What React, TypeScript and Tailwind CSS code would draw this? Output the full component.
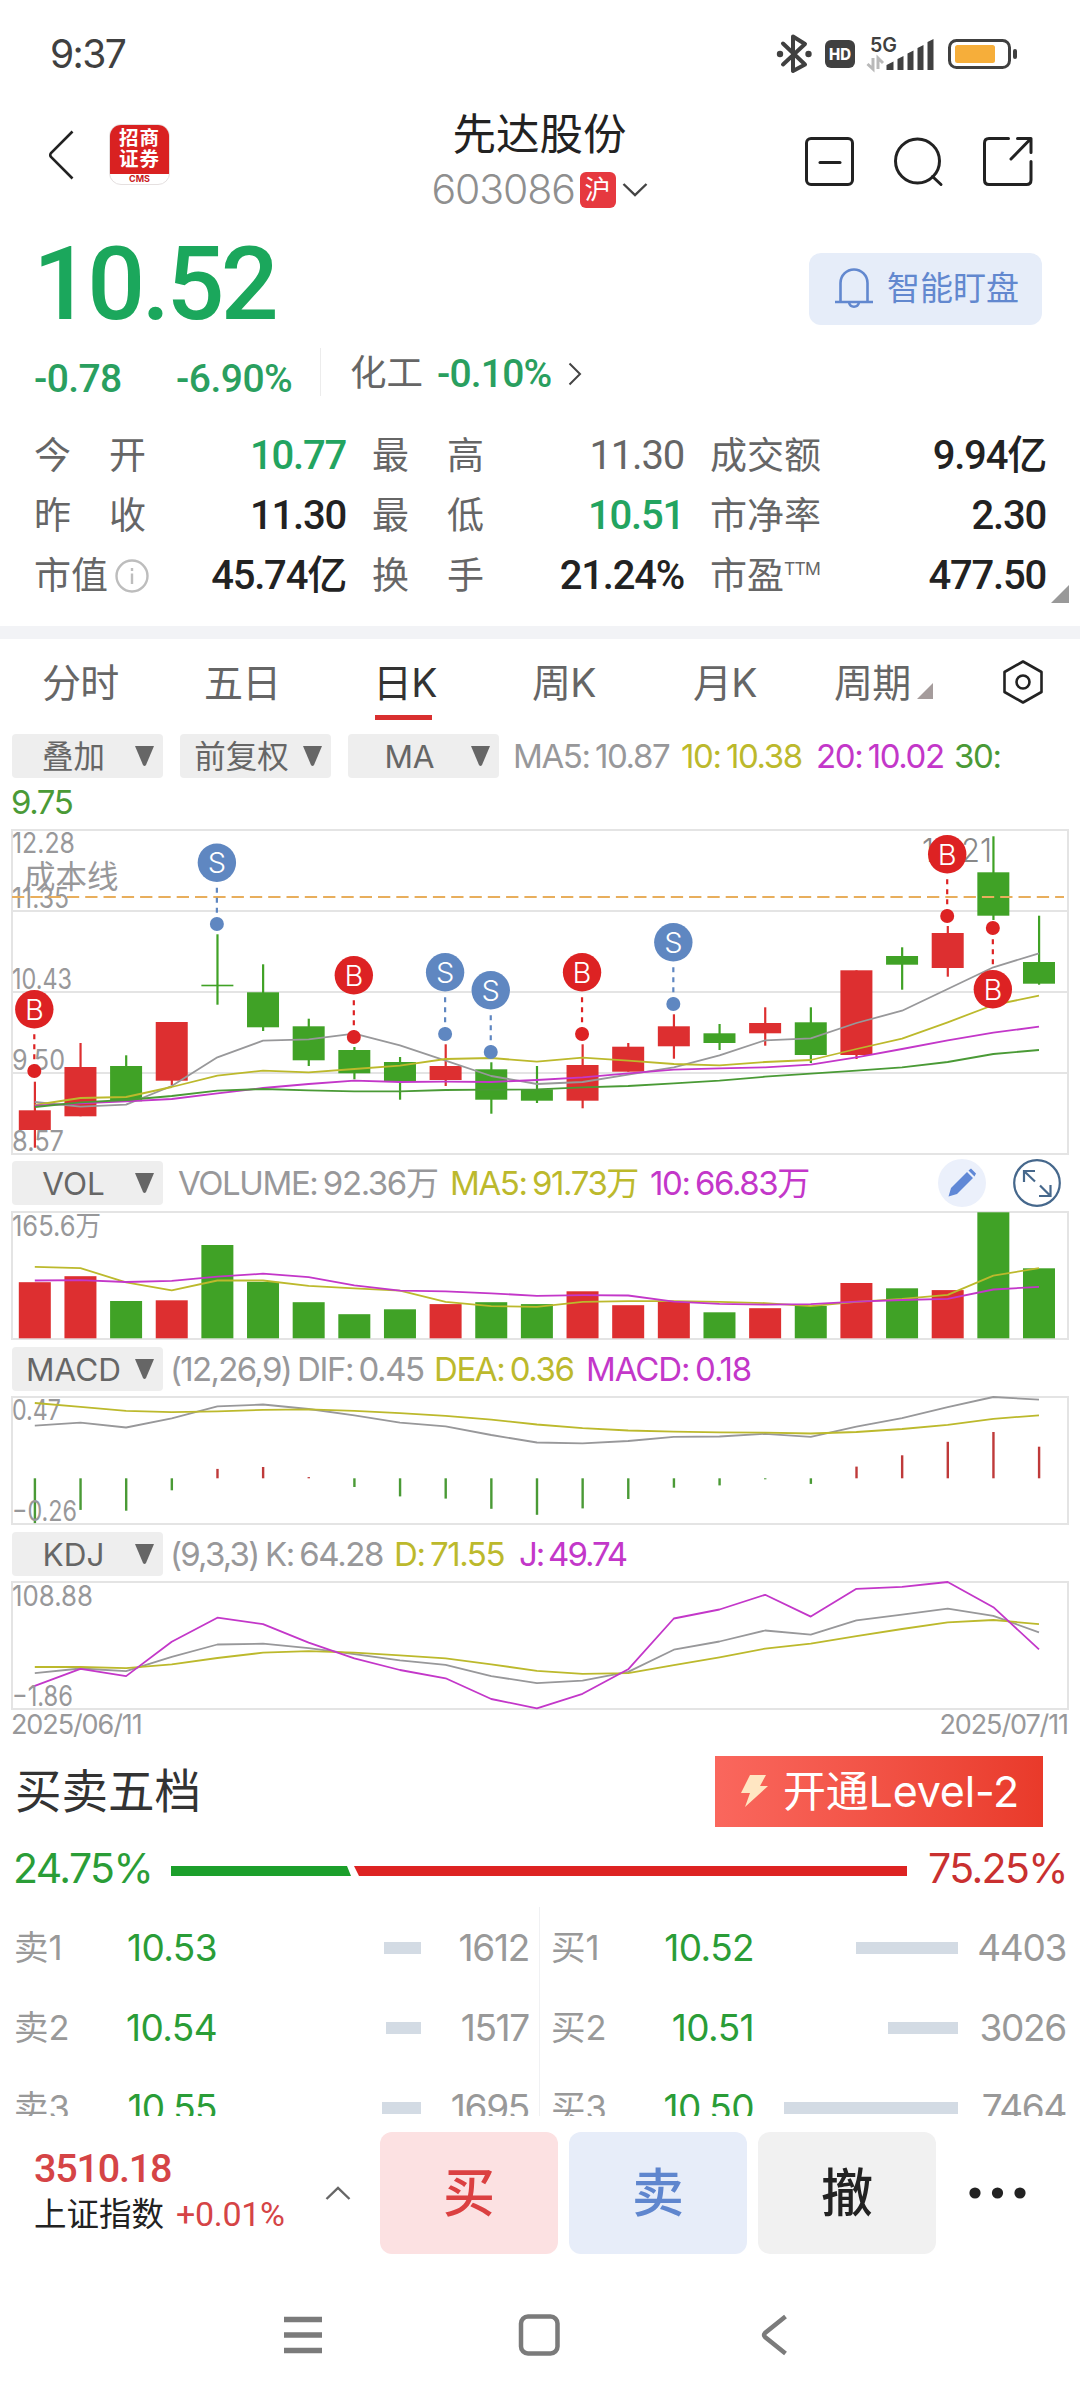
import React from 'react';
import clsx from 'clsx';

const RED = '#dd2f30';
const GREEN = '#40a226';
const GRAY_LINE = '#98989a';
const YELLOW_LINE = '#bcb92c';
const PURPLE_LINE = '#c337c9';
const GREEN_LINE = '#4a9a36';

const STEP = 45.645;
const xAt = (i: number) => 34.8 + i * STEP;

// [up, high, top, bottom, low]
type Candle = [boolean, number, number, number, number];

const candles: Candle[] = [
  [true, 251.7, 280.3, 300, 317.7],
  [true, 213, 237, 286.3, 286.3],
  [false, 225.3, 236, 271.3, 271.3],
  [true, 192, 192, 250.7, 255],
  [false, 104.3, 154.7, 156.3, 174.7],
  [false, 134.3, 162.3, 197.3, 201],
  [false, 188.7, 196.3, 230.3, 236],
  [false, 217, 220, 243.3, 249.3],
  [false, 227, 232, 251, 269.7],
  [true, 214.3, 236, 250, 256],
  [false, 232.3, 239.3, 269.7, 283.7],
  [false, 236, 259.3, 270.7, 273],
  [true, 214.3, 235, 270.7, 278.3],
  [true, 213, 216.7, 241.7, 241.7],
  [true, 184.3, 196.3, 216.3, 228.7],
  [false, 194, 203.3, 213, 220],
  [true, 177.3, 193, 203.3, 215.7],
  [false, 177.3, 192.3, 225, 233],
  [true, 140.3, 140.3, 225, 229],
  [false, 117.3, 126, 134.7, 159.7],
  [true, 96, 103, 138, 146.7],
  [false, 6.3, 42.3, 85.7, 90],
  [false, 85.7, 132, 153.7, 154.7],
];

const ma5 = [272, 276.7, 274.7, 256, 227.3, 210.7, 209.3, 203.7, 215.3, 230.7, 246, 254, 252, 244.7, 237.3, 225.3, 210.3, 208.3, 193, 180.7, 159, 137.3, 123.3];
const ma10 = [275, 268, 267, 257, 245.7, 240.7, 242.3, 239, 235.7, 229, 228, 231.7, 227.7, 230.7, 234, 235.3, 232, 230, 219, 208.7, 192.3, 175, 165.7];
const ma20 = [275.7, 273.3, 271.3, 269, 263.3, 258, 254, 250.7, 252, 251.7, 252, 250, 247.3, 243.3, 239.7, 238.3, 237.3, 234.7, 227.3, 219, 210.3, 202.7, 196.7];
const ma30 = [277, 272.3, 270, 266, 260.7, 259, 260.3, 261.3, 261.3, 260, 259.7, 259.3, 257.3, 256, 253.3, 250.7, 246.7, 243.7, 240.7, 237.3, 232, 224, 220];

const trades = [
  { i: 0, type: 'B', y: 179.3, dot: 241 },
  { i: 4, type: 'S', y: 32.7, dot: 94 },
  { i: 7, type: 'B', y: 145.3, dot: 207 },
  { i: 9, type: 'S', y: 142.3, dot: 204 },
  { i: 10, type: 'S', y: 160.3, dot: 222 },
  { i: 12, type: 'B', y: 142.3, dot: 204 },
  { i: 14, type: 'S', y: 112.3, dot: 174 },
  { i: 20, type: 'B', y: 24.3, dot: 86 },
  { i: 21, type: 'B', y: 159.3, dot: 98 },
];

const volumes = [56.1, 62.1, 37.3, 38, 93.3, 56.4, 36.1, 24.1, 29, 34.2, 36.1, 34.2, 47, 33.1, 36.5, 26, 30.1, 32.4, 55.3, 50, 48.2, 126, 70];
const volMa5 = [54.9, 56.1, 70.4, 78.3, 68.5, 68.5, 73.8, 76.4, 78.6, 89.9, 94.1, 94.8, 89.9, 89.2, 89.2, 89.9, 91.1, 94.1, 89.9, 86.9, 82.8, 63.6, 56.1];
const volMa10 = [68.5, 68.1, 70, 68.9, 64.7, 61.7, 65.1, 73.4, 78.6, 79.4, 81.3, 83.9, 83.2, 83.5, 89.6, 91.8, 92.6, 92.2, 89.6, 88, 86.9, 77.5, 74.9];

const dif = [28.6, 25.6, 30.5, 21.4, 9.4, 7.5, 12, 18.4, 25.6, 29.4, 38, 45.5, 46.3, 44, 39.9, 39.5, 36.9, 39.9, 29.7, 21.1, 10.2, 0, 2.6];
const dea = [6, 9.8, 13.9, 15.1, 14.3, 12.8, 12.4, 13.9, 16.2, 18.8, 22.6, 27.5, 31.2, 33.5, 34.6, 35.4, 35.7, 36.5, 35, 32, 27.8, 21.8, 18.4];
const macd = [-44.8, -31.6, -32.4, -12, 9.4, 11.3, 1.2, -8.7, -18.1, -20.3, -30.5, -36.5, -30.1, -20.7, -9.4, -7.1, -1, -5.6, 11.7, 23, 36.5, 46.3, 31.6];

const kLine = [91.1, 86.5, 89.2, 74.9, 62.5, 61.7, 66.2, 72.2, 78.3, 82.8, 94.1, 101.2, 98.6, 89.9, 67.7, 59.5, 48.5, 52.7, 38.4, 32.7, 26.7, 33.9, 50.4];
const dLine = [85, 85, 86.2, 82.4, 76, 70.7, 69.2, 70.7, 73.4, 76.4, 82.4, 88.8, 91.8, 91.1, 83.2, 75.3, 66.6, 61.7, 54.2, 47, 40.3, 38, 42.1];
const jLine = [103.9, 86.9, 94.1, 59.8, 35.7, 42.1, 60.6, 76.4, 88, 96.3, 117, 126.4, 111.8, 87.3, 36.5, 27.5, 12.8, 34.6, 6.8, 4.9, 0, 25.2, 67.4];

const asks = [
  { label: '卖1', price: '10.53', size: 1612, bar: 37 },
  { label: '卖2', price: '10.54', size: 1517, bar: 35 },
  { label: '卖3', price: '10.55', size: 1695, bar: 39 },
];
const bids = [
  { label: '买1', price: '10.52', size: 4403, bar: 102 },
  { label: '买2', price: '10.51', size: 3026, bar: 70 },
  { label: '买3', price: '10.50', size: 7464, bar: 174 },
];

const numeric = "[font-family:Roboto,'Noto_Sans_CJK_SC',sans-serif]";

const Line: React.FC<{ data: number[]; color: string }> = ({ data, color }) => (
  <polyline
    points={data.map((y, i) => `${xAt(i)},${y}`).join(' ')}
    fill="none"
    stroke={color}
    strokeWidth={1.8}
    strokeLinejoin="round"
  />
);

const AxisLabel: React.FC<{ y: number; width: number; children: React.ReactNode }> = ({ y, width, children }) => (
  <text x={12} y={y} fontSize={28} fill="#98989a" textLength={width} lengthAdjust="spacingAndGlyphs">
    {children}
  </text>
);

const Frame: React.FC<{ height: number }> = ({ height }) => (
  <rect x={12} y={0} width={1056} height={height} fill="none" stroke="#e4e4e4" strokeWidth={2} />
);

const StatusBar = () => (
  <div className="flex h-[108px] items-center justify-between pl-[50px] pr-[63px]">
    <span className="text-[39px] tracking-[-1.6px] text-[#404040]">9:37</span>
    <svg width="242" height="40" viewBox="775 34 242 40" fill="none">
      <path
        d="M783 43.5 L805 64.5 L793 71 V36.5 L805 44 L783 64.5"
        stroke="#404040"
        strokeWidth="4"
        strokeLinejoin="round"
        strokeLinecap="round"
      />
      <circle cx="780" cy="54" r="3.2" fill="#404040" />
      <circle cx="808.5" cy="54" r="3.2" fill="#404040" />
      <rect x="825" y="40" width="30" height="28" rx="6" fill="#404040" />
      <text x="840" y="60" fontSize="16" fontWeight="800" fill="#fff" textAnchor="middle" textLength="22" lengthAdjust="spacingAndGlyphs">HD</text>
      <text x="870" y="51.5" fontSize="20" fontWeight="600" fill="#404040" textLength="27" lengthAdjust="spacingAndGlyphs">5G</text>
      <path d="M873 58 V69 L867.5 64 M878 69 V58 L883 63" stroke="#b9b9b9" strokeWidth="3" />
      <path
        d="M886.5 70 V65 L893.5 61.5 V70 Z M897.5 70 V59 L903.5 56 V70 Z M907.5 70 V53.5 L913.5 50.5 V70 Z M917.5 70 V48 L923.5 45 V70 Z M927.5 70 V42 L933.5 39 V70 Z"
        fill="#404040"
      />
      <rect x="949.5" y="40.5" width="60" height="27" rx="7" stroke="#404040" strokeWidth="3" />
      <rect x="955" y="45" width="40" height="18" rx="2.5" fill="#f6ae3a" />
      <rect x="1013" y="49" width="4" height="10" rx="2" fill="#404040" />
    </svg>
  </div>
);

const Header = () => (
  <div className="flex h-[106px] items-center justify-between pl-[48px] pr-[47px]">
    <div className="flex w-[298px] items-center gap-[35px]">
      <svg className="-mt-3" width="26" height="50" viewBox="0 0 26 50" fill="none">
        <path d="M24.5 1.5 L3 23 Q1.5 25 3 27 L24.5 48.5" stroke="#222" strokeWidth="2.6" />
      </svg>
      <div className="-mt-[14px] flex h-[61px] w-[61px] flex-col items-center overflow-hidden rounded-[12px] border border-[#e5e0e0] bg-white">
        <div className="flex h-[49px] w-[61px] flex-none flex-col items-center bg-[#d92121] pt-[3px] text-[19.5px] font-bold leading-[21.5px] tracking-[1px] text-white">
          <span>招商</span>
          <span>证券</span>
        </div>
        <span className="text-[9px] font-bold leading-[10px] text-[#c92020]">CMS</span>
      </div>
    </div>
    <div className="flex flex-col items-center">
      <span className="h-[57px] text-[43.5px] leading-[60px] text-[#222]">先达股份</span>
      <div className="flex h-[57px] items-center text-[41px] font-light text-[#8f8f8f]">
        <span className="w-[148px] tracking-[-1.1px]">603086</span>
        <span className="flex h-[36px] w-[36px] items-center justify-center rounded-[6px] bg-[#e6393f] text-[26px] font-normal text-white">沪</span>
        <svg className="ml-[6px]" width="26" height="16" viewBox="0 0 26 16" fill="none">
          <path d="M1.5 2 L13 13 L24.5 2" stroke="#444" strokeWidth="2.4" />
        </svg>
      </div>
    </div>
    <div className="flex w-[300px] justify-end gap-[39px] pt-px">
      <svg width="50" height="50" viewBox="0 0 50 50" fill="none" stroke="#222" strokeWidth="3">
        <rect x="1.5" y="1.5" width="46" height="46" rx="4.5" />
        <path d="M15 25.5 H35" strokeLinecap="round" />
      </svg>
      <svg width="50" height="50" viewBox="0 0 50 50" fill="none" stroke="#222" strokeWidth="3">
        <circle cx="23.5" cy="24" r="22" />
        <path d="M38.5 39.5 L47 47.5" strokeLinecap="round" />
      </svg>
      <svg width="50" height="50" viewBox="0 0 50 50" fill="none" stroke="#222" strokeWidth="3">
        <path d="M25.5 1.5 H6 Q1.5 1.5 1.5 6 V43 Q1.5 47.5 6 47.5 H43.5 Q48 47.5 48 43 V24.5" strokeLinecap="round" />
        <path d="M34.5 1.5 H48 V15.5 M47.5 2 L28 22" strokeLinecap="round" strokeLinejoin="round" />
      </svg>
    </div>
  </div>
);

const PriceBlock = () => (
  <>
    <div className="flex h-[134px] items-center justify-between pl-[33px] pr-[38px]">
      <span className={clsx(numeric, 'pt-[6px] text-[102px] font-medium leading-none tracking-[-3.6px] text-[#1ba75c]')}>10.52</span>
      <div className="mt-4 flex h-[72px] w-[233px] items-center rounded-[12px] bg-[#e6edf9] pl-[25px]">
        <svg width="40" height="42" viewBox="0 0 40 42" fill="none" stroke="#6288cf" strokeWidth="2.6">
          <path d="M1 34 H39 M6.5 34 V15 A13.5 13.5 0 0 1 33.5 15 V34 M15 34.5 A5.2 5.8 0 0 0 25 34.5" />
        </svg>
        <span className="ml-[13px] whitespace-nowrap text-[33px] text-[#6288cf]">智能盯盘</span>
      </div>
    </div>
    <div className={clsx(numeric, 'flex h-[77px] items-start pl-[34px] text-[39px] font-medium leading-[52px] text-[#2a9f5f]')}>
      <span className="mt-[5px] w-[142px] tracking-[-0.6px]">-0.78</span>
      <span className="mt-[5px] w-[144px] tracking-[-0.5px]">-6.90%</span>
      <span className="h-[48px] w-px bg-[#ececec]" />
      <span className="ml-[29px] w-[87px] whitespace-nowrap text-[36.5px] font-normal text-[#666]">化工</span>
      <span className="w-[131px] tracking-[-0.8px]">-0.10%</span>
      <svg className="mt-[14px]" width="14" height="24" viewBox="0 0 14 24" fill="none">
        <path d="M1.5 1.5 L12 12 L1.5 22.5" stroke="#444" strokeWidth="2" />
      </svg>
    </div>
  </>
);

interface StatProps {
  label: React.ReactNode;
  value: string;
  tone?: 'green' | 'gray' | 'dark';
  spaced?: boolean;
}

const Stat: React.FC<StatProps> = ({ label, value, tone = 'dark', spaced }) => (
  <div className="flex h-[60px] items-center justify-between whitespace-nowrap pt-px">
    <span className={clsx('flex items-center text-[37px] text-[#666]', spaced && 'w-[112px] justify-between')}>{label}</span>
    <span
      className={clsx(
        numeric,
        'text-[40px] tracking-[-1.2px]',
        tone === 'green' && 'font-medium text-[#23a460]',
        tone === 'gray' && 'text-[#666]',
        tone === 'dark' && 'font-medium text-[#222]'
      )}
    >
      {value}
    </span>
  </div>
);

const two = (a: string, b: string) => (
  <>
    <span>{a}</span>
    <span>{b}</span>
  </>
);

const Stats = () => (
  <div className="relative grid h-[201px] grid-cols-[312px_312px_336px] content-start gap-x-[26px] pl-[34px]">
    <Stat label={two('今', '开')} value="10.77" tone="green" spaced />
    <Stat label={two('最', '高')} value="11.30" tone="gray" spaced />
    <Stat label="成交额" value="9.94亿" />
    <Stat label={two('昨', '收')} value="11.30" spaced />
    <Stat label={two('最', '低')} value="10.51" tone="green" spaced />
    <Stat label="市净率" value="2.30" />
    <Stat
      label={
        <>
          市值
          <svg className="ml-[7px]" width="34" height="34" viewBox="0 0 34 34" fill="none" stroke="#bdbdbd" strokeWidth="2.4">
            <circle cx="17" cy="17" r="15.5" />
            <path d="M17 14.5 V25 M17 9 V12" />
          </svg>
        </>
      }
      value="45.74亿"
    />
    <Stat label={two('换', '手')} value="21.24%" spaced />
    <Stat
      label={
        <>
          市盈<span className="mb-[12px] text-[17.5px] tracking-[-0.8px]">TTM</span>
        </>
      }
      value="477.50"
    />
    <svg className="absolute bottom-[23px] right-[11px]" width="18" height="18" viewBox="0 0 18 18">
      <path d="M18 0 V18 H0 Z" fill="#999" />
    </svg>
  </div>
);

const tabs = [
  { label: '分时', width: 'w-[162px]' },
  { label: '五日', width: 'w-[169px]' },
  { label: '日K', width: 'w-[159px]' },
  { label: '周K', width: 'w-[161px]' },
  { label: '月K', width: 'w-[141px]' },
  { label: '周期', width: 'w-[169px]' },
];

const Tabs = () => (
  <div className="flex h-[95px] pl-[42px] text-[39px] leading-[88px] text-[#666]">
    {tabs.map((tab, idx) => (
      <div key={tab.label} className={clsx('flex flex-none', tab.width, idx === 2 && 'text-[#333]')}>
        <span className="relative tracking-[-0.8px]">
          {tab.label}
          {idx === 2 && <span className="absolute left-[2px] top-[76px] h-[5px] w-[57px] bg-[#d92f2f]" />}
        </span>
        {idx === 5 && (
          <svg className="ml-[7px] mt-[44px]" width="16" height="16" viewBox="0 0 16 16">
            <path d="M16 0 V16 H0 Z" fill="#a59c9c" />
          </svg>
        )}
      </div>
    ))}
    <svg className="mt-[21px]" width="40" height="44" viewBox="0 0 40 44" fill="none" stroke="#222" strokeWidth="2.6">
      <path d="M20 1.5 L38.5 12 V32 L20 42.5 L1.5 32 V12 Z" strokeLinejoin="round" />
      <circle cx="20" cy="22" r="6.5" />
    </svg>
  </div>
);

const Dropdown: React.FC<{ label: string }> = ({ label }) => (
  <div className="flex h-[44px] w-[151px] flex-none items-center rounded-[4px] bg-[#eee] pr-[9px] text-[31.5px] text-[#666]">
    <span className="flex-1 whitespace-nowrap pt-[2px] text-center">{label}</span>
    <svg width="19" height="20" viewBox="0 0 19 20">
      <path d="M0 0 H19 L11 19 Q9.5 21 8 19 Z" fill="#666" />
    </svg>
  </div>
);

const legendText = 'flex items-center whitespace-nowrap text-[33px] tracking-[-1.4px] [word-spacing:-2.5px]';

const CandleChart = () => (
  <svg className="block" width="1080" height="330" viewBox="0 -1 1080 330">
    <Frame height={324} />
    <path d="M12 81 H1068 M12 162 H1068 M12 243 H1068" stroke="#e4e4e4" strokeWidth="2" />
    {candles.map(([up, high, top, bottom, low], i) => (
      <g key={i} fill={up ? RED : GREEN}>
        <rect x={xAt(i) - 1} y={high} width={2.2} height={low - high} />
        <rect x={xAt(i) - 16} y={top} width={32} height={bottom - top} />
      </g>
    ))}
    <AxisLabel y={23} width={63}>12.28</AxisLabel>
    <AxisLabel y={78} width={57}>11.35</AxisLabel>
    <AxisLabel y={159} width={60}>10.43</AxisLabel>
    <AxisLabel y={240} width={53}>9.50</AxisLabel>
    <AxisLabel y={321} width={52}>8.57</AxisLabel>
    <text x="24" y="58" fontSize="31.5" fill="#98989a">成本线</text>
    <path d="M12 67 H1064" stroke="#e8ae5c" strokeWidth="2.2" strokeDasharray="12.3 6" />
    <Line data={ma5} color={GRAY_LINE} />
    <Line data={ma10} color={YELLOW_LINE} />
    <Line data={ma20} color={PURPLE_LINE} />
    <Line data={ma30} color={GREEN_LINE} />
    <text x="922" y="32" fontSize="33" fontWeight="300" fill="#888" textLength="70" lengthAdjust="spacingAndGlyphs">12.21</text>
    {trades.map(({ i, type, y, dot }) => {
      const color = type === 'B' ? '#dd2223' : '#5f87c1';
      return (
        <g key={i} fill={color}>
          <path
            d={`M${xAt(i) - 0.5} ${y < dot ? y + 25 : y - 25} V${y < dot ? dot - 6 : dot + 6}`}
            stroke={color}
            strokeWidth="2.2"
            strokeDasharray="5 5"
          />
          <circle cx={xAt(i) - 0.5} cy={y} r="19.2" />
          <circle cx={xAt(i) - 0.5} cy={dot} r="7" />
          <text x={xAt(i) - 0.5} y={y + 10.5} fontSize="29" fontWeight="300" fill="#fff" textAnchor="middle">{type}</text>
        </g>
      );
    })}
  </svg>
);

const VolumeChart = () => (
  <svg className="block" width="1080" height="134" viewBox="0 -1 1080 134">
    <Frame height={127} />
    {volumes.map((v, i) => (
      <rect key={i} x={xAt(i) - 16} y={126.3 - v} width={32} height={v} fill={candles[i][0] ? RED : GREEN} />
    ))}
    <AxisLabel y={24} width={89}>165.6万</AxisLabel>
    <Line data={volMa5} color={YELLOW_LINE} />
    <Line data={volMa10} color={PURPLE_LINE} />
  </svg>
);

const MacdChart = () => (
  <svg className="block" width="1080" height="134" viewBox="0 -1 1080 134">
    <Frame height={127} />
    {macd.map((v, i) => (
      <rect
        key={i}
        x={xAt(i) - 1.1}
        y={v > 0 ? 81.3 - v : 81.3}
        width={2.4}
        height={Math.abs(v)}
        fill={v > 0 ? '#bf3a3a' : '#4a9a36'}
      />
    ))}
    <AxisLabel y={23} width={49}>0.47</AxisLabel>
    <AxisLabel y={124} width={65}>−0.26</AxisLabel>
    <Line data={dif} color={GRAY_LINE} />
    <Line data={dea} color={YELLOW_LINE} />
  </svg>
);

const KdjChart = () => (
  <svg className="block" width="1080" height="130" viewBox="0 -1 1080 130">
    <Frame height={127} />
    <AxisLabel y={23.5} width={81}>108.88</AxisLabel>
    <AxisLabel y={124} width={61}>−1.86</AxisLabel>
    <Line data={kLine} color={GRAY_LINE} />
    <Line data={dLine} color={YELLOW_LINE} />
    <Line data={jLine} color={PURPLE_LINE} />
  </svg>
);

const Charts = () => (
  <div className="h-[1009px]">
    <div className="flex h-[44px] gap-[17px] pl-[12px]">
      <Dropdown label="叠加" />
      <Dropdown label="前复权" />
      <Dropdown label="MA" />
      <div className={clsx(legendText, '-ml-[3px] pt-[2px]')}>
        <span className="w-[168px] text-[#98989a]">MA5: 10.87</span>
        <span className="w-[135px] text-[#bcb92c]">10: 10.38</span>
        <span className="w-[138px] text-[#c337c9]">20: 10.02</span>
        <span className="text-[#4a9a36]">30:</span>
      </div>
    </div>
    <div className={clsx(legendText, 'h-[51px] pb-[2px] pl-[11px] text-[#4a9a36]')}>9.75</div>
    <CandleChart />
    <div className="flex h-[52px] items-start pl-[12px] pt-[2px]">
      <Dropdown label="VOL" />
      <div className={clsx(legendText, 'h-[46px] pl-[15px]')}>
        <span className="w-[272px] text-[#98989a]">VOLUME: 92.36万</span>
        <span className="w-[200px] text-[#bcb92c]">MA5: 91.73万</span>
        <span className="w-[287px] text-[#c337c9]">10: 66.83万</span>
      </div>
      <svg className="-mt-[3px] flex-none" width="124" height="50" viewBox="0 0 124 50" fill="none">
        <circle cx="25" cy="25" r="24" fill="#ebf0fb" />
        <path d="M11.5 38.5 L14 30 L30 14 L36 20 L20 36 Z M31.5 12.5 L34 10.5 L39 15.5 L37.5 18.5 Z" fill="#6088d6" />
        <circle cx="100" cy="25" r="22.8" stroke="#46688c" strokeWidth="2.2" />
        <path
          d="M98 23.5 L87.5 13.5 M87 24 V13 H98 M103 27.5 L113 37.5 M102 38 H113.5 V27"
          stroke="#46688c"
          strokeWidth="2.2"
        />
      </svg>
    </div>
    <VolumeChart />
    <div className="flex h-[51px] items-start pl-[12px] pt-[2px]">
      <Dropdown label="MACD" />
      <div className={clsx(legendText, 'h-[46px] pl-[7px]')}>
        <span className="w-[127px] tracking-[-1.7px] text-[#98989a]">(12,26,9)</span>
        <span className="w-[137px] text-[#98989a]">DIF: 0.45</span>
        <span className="w-[152px] text-[#bcb92c]">DEA: 0.36</span>
        <span className="tracking-[-1.1px] text-[#c337c9]">MACD: 0.18</span>
      </div>
    </div>
    <MacdChart />
    <div className="flex h-[51px] items-start pl-[12px] pt-[2px]">
      <Dropdown label="KDJ" />
      <div className={clsx(legendText, 'h-[46px] pl-[7px]')}>
        <span className="w-[95px] tracking-[-1.8px] text-[#98989a]">(9,3,3)</span>
        <span className="w-[129px] text-[#98989a]">K: 64.28</span>
        <span className="w-[125px] text-[#bcb92c]">D: 71.55</span>
        <span className="tracking-[-2px] text-[#c337c9]">J: 49.74</span>
      </div>
    </div>
    <KdjChart />
    <div className="flex justify-between pl-[11px] pr-[12px] text-[27px] leading-[28px] tracking-[-1.1px] text-[#98989a]">
      <span>2025/06/11</span>
      <span>2025/07/11</span>
    </div>
  </div>
);

interface LevelProps {
  level: { label: string; price: string; size: number; bar: number };
  labelWidth: string;
}

const Level: React.FC<LevelProps> = ({ level, labelWidth }) => (
  <div className="flex h-[80px] items-center pt-px text-[37px] text-[#999]">
    <span className={clsx('flex-none whitespace-nowrap text-[34.5px]', labelWidth)}>{level.label}</span>
    <span className="w-[92px] flex-none text-right tracking-[-0.6px] text-[#2a9d37]">{level.price}</span>
    <div className="flex flex-1 justify-end">
      <div className="h-[12px] bg-[#d3dbe4]" style={{ width: level.bar }} />
    </div>
    <span className="w-[108px] flex-none text-right tracking-[-1.3px]">{level.size}</span>
  </div>
);

const OrderBook = () => (
  <div className="h-[373px] overflow-hidden">
    <div className="flex h-[96px] items-center justify-between pl-[15px] pr-[37px]">
      <span className="pt-[2px] text-[46.5px] text-[#333]">买卖五档</span>
      <div className="flex h-[71px] w-[328px] items-center bg-linear-to-r from-[#fa675d] to-[#e93a2a] pl-[26px] text-white">
        <svg width="27" height="34" viewBox="0 0 27 34">
          <path d="M9 1 H25 L19 12 H27 L4 33 L9 19 H0 Z" fill="#ffe6c2" />
        </svg>
        <span className="ml-[15px] whitespace-nowrap pt-px text-[43px] tracking-[-0.2px]">开通Level-2</span>
      </div>
    </div>
    <div className="flex h-[57px] items-center pl-[13px] pt-[2px] text-[41px] tracking-[-1.6px]">
      <span className="w-[158px] text-[#2a9d37]">24.75%</span>
      <svg className="mt-[4px]" width="737" height="10" viewBox="0 0 737 10">
        <path d="M0 0 H176 L180 10 H0 Z" fill="#1c9f2b" />
        <path d="M183 0 H736 V10 H188 Z" fill="#dd2322" />
      </svg>
      <span className="flex-1 pr-[13px] text-right text-[#c93030]">75.25%</span>
    </div>
    <div className="mt-[11px] flex">
      <div className="w-[539px] pr-[10px]">
        {asks.map(level => (
          <Level key={level.label} level={level} labelWidth="w-[125px] pl-[14px]" />
        ))}
      </div>
      <div className="w-[541px] border-l border-[#f0f1f3] pr-[14px]">
        {bids.map(level => (
          <Level key={level.label} level={level} labelWidth="w-[122px] pl-[11px]" />
        ))}
      </div>
    </div>
  </div>
);

const TradeBar = () => (
  <div className="flex h-[150px] items-start bg-white pl-[34px] pt-[16px]">
    <div className="w-[291px] whitespace-nowrap pt-[15px]">
      <div className={clsx(numeric, 'text-[39.5px] font-medium leading-[44px] tracking-[-1.2px] text-[#d54446]')}>3510.18</div>
      <div className={clsx(numeric, 'text-[32.5px] leading-[47px] text-[#222]')}>
        上证指数<span className="ml-[12px] text-[34px] tracking-[-0.3px] text-[#d54446]">+0.01%</span>
      </div>
    </div>
    <svg className="mt-[54px]" width="26" height="14" viewBox="0 0 26 14" fill="none">
      <path d="M1.5 13 L13 2 L24.5 13" stroke="#666" strokeWidth="2.4" />
    </svg>
    <div className="ml-[29px] flex gap-[11px] text-[52px] font-medium leading-[124px]">
      <button className="h-[122px] w-[178px] rounded-[12px] bg-[#fce1e2] text-[#db4041]">买</button>
      <button className="h-[122px] w-[178px] rounded-[12px] bg-[#e7edf9] text-[#5f86ce]">卖</button>
      <button className="h-[122px] w-[178px] rounded-[12px] bg-[#f1f1f1] text-[#222]">撤</button>
    </div>
    <svg className="ml-[32px] mt-[55px]" width="58" height="12" viewBox="0 0 58 12" fill="#222">
      <circle cx="7" cy="6" r="5.6" />
      <circle cx="29.5" cy="6" r="5.6" />
      <circle cx="52" cy="6" r="5.6" />
    </svg>
  </div>
);

const NavBar = () => (
  <div className="flex h-[134px] items-start gap-[195px] pl-[284px] pt-[47px]">
    <svg width="38" height="44" viewBox="0 0 38 44" stroke="#7b7b7b" strokeWidth="5.5">
      <path d="M0 6.5 H38 M0 22 H38 M0 37.5 H38" />
    </svg>
    <svg width="44" height="44" viewBox="0 0 44 44" fill="none" stroke="#7b7b7b" strokeWidth="4.5">
      <rect x="4" y="3.5" width="36.5" height="37" rx="7" />
    </svg>
    <svg className="ml-[4px]" width="28" height="44" viewBox="0 0 28 44" fill="none" stroke="#7b7b7b" strokeWidth="4.5">
      <path d="M25.5 3.5 L5 20 Q3 22 5 24 L25.5 40.5" />
    </svg>
  </div>
);

export default function App() {
  return (
    <div className="h-[2400px] w-[1080px] overflow-hidden bg-white [font-family:Inter,'Noto_Sans_CJK_SC',sans-serif]">
      <StatusBar />
      <Header />
      <PriceBlock />
      <Stats />
      <div className="h-[13px] bg-[#f2f3f6]" />
      <Tabs />
      <Charts />
      <OrderBook />
      <TradeBar />
      <NavBar />
    </div>
  );
}
